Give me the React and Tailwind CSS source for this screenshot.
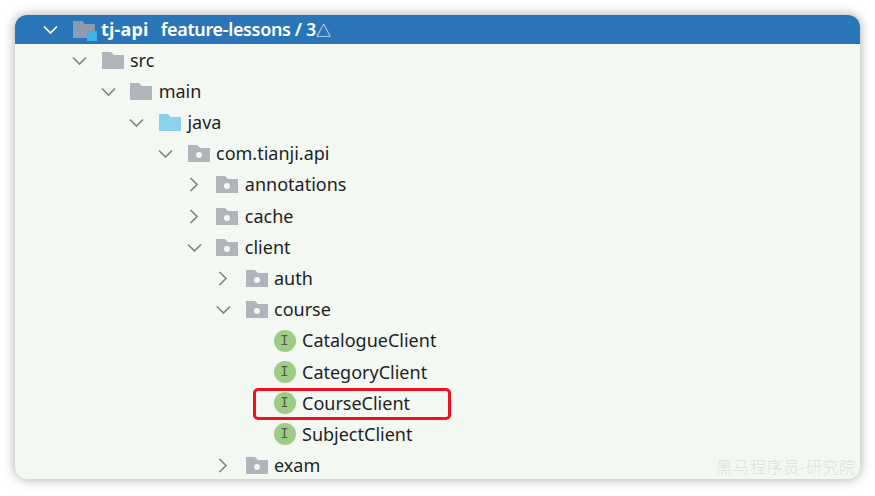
const rows = [
    { name: "src", type: "folder", open: true, pad: "pl-[57px]" },
    { name: "main", type: "folder", open: true, pad: "pl-[85.7px]" },
    { name: "java", type: "source", open: true, pad: "pl-[114.4px]" },
    { name: "com.tianji.api", type: "package", open: true, pad: "pl-[143px]" },
    { name: "annotations", type: "package", pad: "pl-[171.8px]" },
    { name: "cache", type: "package", pad: "pl-[171.8px]" },
    { name: "client", type: "package", open: true, pad: "pl-[171.8px]" },
    { name: "auth", type: "package", pad: "pl-[201px]" },
    { name: "course", type: "package", open: true, pad: "pl-[201px]" },
    { name: "CatalogueClient", type: "interface", pad: "pl-[258.5px]" },
    { name: "CategoryClient", type: "interface", pad: "pl-[258.5px]" },
    { name: "CourseClient", type: "interface", pad: "pl-[258.5px]" },
    { name: "SubjectClient", type: "interface", pad: "pl-[258.5px]" },
    { name: "exam", type: "package", pad: "pl-[201px]" },
];

function Chevron({ open, color = "#7f8488" }) {
    return (
        <svg width="15" height="15" viewBox="0 0 15 15" fill="none" stroke={color} strokeWidth="1.7">
            {open ? <path d="M1 4.5l6.5 6.5 6.5-6.5" /> : <path d="M3.5 1l6.5 6.5-6.5 6.5" />}
        </svg>
    );
}

function Folder({ color = "#afb5ba", dot }) {
    return (
        <svg width="22" height="17" viewBox="0 0 22 17">
            <path d="M0 0h9l3 3h10v14H0z" fill={color} />
            {dot && <circle cx="11" cy="10" r="3" fill="#f4f8f3" />}
        </svg>
    );
}

function RowIcon({ type }) {
    if (type === "interface") {
        return (
            <div className="w-[22px] h-[22px] rounded-full bg-[#9dcc85] flex items-center justify-center text-[#50574d] text-[14px] font-['Liberation_Mono',monospace] leading-none">
                I
            </div>
        );
    }
    if (type === "source") return <Folder color="#8cd1ea" />;
    return <Folder dot={type === "package"} />;
}

function TreeRow({ row }) {
    const isFile = row.type === "interface";
    return (
        <div className={`h-[31.2px] flex items-center ${row.pad}`}>
            {!isFile && (
                <div className="w-[29.5px] flex shrink-0">
                    <Chevron open={row.open} />
                </div>
            )}
            <div className="w-[28.5px] shrink-0">
                <RowIcon type={row.type} />
            </div>
            <span>{row.name}</span>
        </div>
    );
}

export default function App() {
    return (
        <div className="w-[875px] h-[496px] bg-white p-[15px_15px_17px] font-['Noto_Sans','Noto_Sans_CJK_SC',sans-serif] overflow-hidden">
            <div className="relative h-[464px] rounded-[12px] overflow-hidden bg-[#f4f8f3] text-[18px] text-[#1c1f1f] shadow-[0_0_12px_rgba(0,0,0,0.35)]">
                {/* Header */}
                <div className="h-[29px] bg-[#2a75b8] flex items-center pl-[28px] pb-[1px] text-white font-semibold">
                    <div className="w-[29.5px] flex shrink-0">
                        <Chevron open color="#ffffff" />
                    </div>
                    <div className="w-[28.5px] relative h-[24px] flex items-center shrink-0">
                        <Folder color="#8b9cb0" />
                        <div className="absolute left-[14px] bottom-0 w-[10px] h-[10px] bg-[#3fb1e3]" />
                    </div>
                    <span className="font-bold tracking-[0.2px]">tj-api</span>
                    <span className="ml-[12px] tracking-[-0.35px]">
                        feature-lessons / 3<span className="text-[15px] font-normal">△</span>
                    </span>
                </div>

                {/* Tree */}
                <div className="pt-[0.6px]">
                    {rows.map((row) => (
                        <TreeRow key={row.name} row={row} />
                    ))}
                </div>

                {/* Red highlight */}
                <div className="absolute left-[238px] top-[373px] w-[198px] h-[31.5px] border-[3px] border-[#f0121c] rounded-[5px]" />

                {/* Watermark */}
                <div className="absolute right-[4px] bottom-[1px] text-[16px] tracking-[0.7px] font-light text-[#dde1db] font-['Noto_Sans_CJK_SC',sans-serif]">
                    黑马程序员-研究院
                </div>
            </div>
        </div>
    );
}
